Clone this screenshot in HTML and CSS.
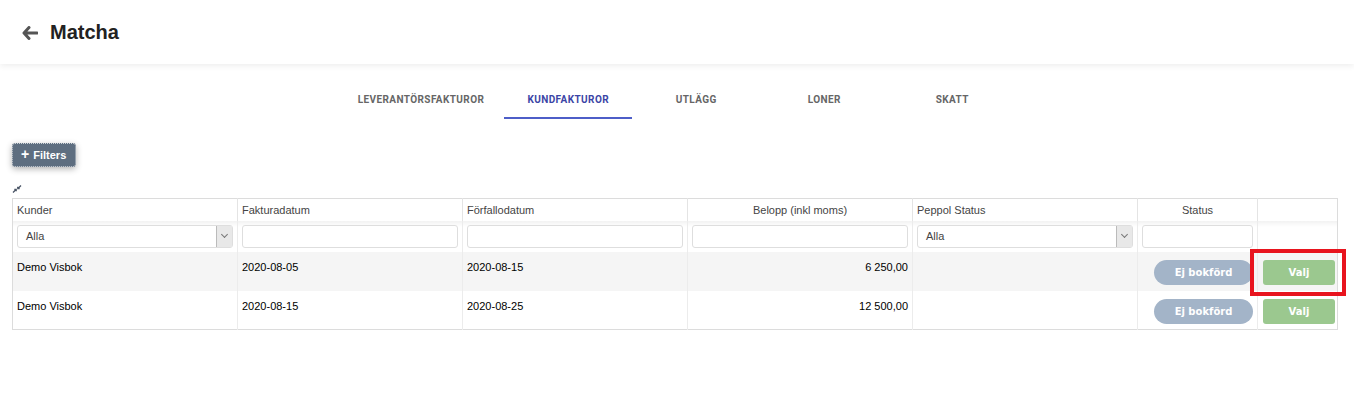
FILE: index.html
```html
<!DOCTYPE html>
<html lang="sv">
<head>
  <meta charset="UTF-8">
  <meta name="viewport" content="width=device-width, initial-scale=1">
  <title>Matcha</title>
  <link rel="stylesheet" href="styles.css">
</head>
<body>

  <header class="topbar">
    <a class="back" href="#">
      <svg width="16" height="14" viewBox="0 0 16 14"><path d="M7 1.5 L2 7 L7 12.5 M2.5 7 H15" fill="none" stroke="#555" stroke-width="3" stroke-linecap="round" stroke-linejoin="round"/></svg>
    </a>
    <h1>Matcha</h1>
  </header>

  <nav class="tabs">
    <a class="tab" href="#">Leverantörsfakturor</a>
    <a class="tab active" href="#">Kundfakturor</a>
    <a class="tab" href="#">Utlägg</a>
    <a class="tab" href="#">Loner</a>
    <a class="tab" href="#">Skatt</a>
  </nav>

  <section class="content">
    <button class="btn-filters"><b class="plus">+</b> Filters</button>

    <div class="collapse">
      <svg width="10" height="8" viewBox="0 0 10 8"><path d="M1 7.5 L4 4.5 M2.3 4.3 H4.2 V6.2 M9 0.5 L6 3.5 M7.7 3.7 H5.8 V1.8" fill="none" stroke="#4a5566" stroke-width="1.3"/></svg>
    </div>

    <table class="grid">
      <colgroup>
        <col style="width:225px"><col style="width:225px"><col style="width:225px">
        <col style="width:225px"><col style="width:225px"><col style="width:120px"><col>
      </colgroup>
      <thead>
        <tr class="head">
          <th>Kunder</th>
          <th>Fakturadatum</th>
          <th>Förfallodatum</th>
          <th class="center">Belopp (inkl moms)</th>
          <th>Peppol Status</th>
          <th class="center">Status</th>
          <th></th>
        </tr>
        <tr class="filter">
          <td><div class="select"><span>Alla</span><i class="caret"></i></div></td>
          <td><div class="input"></div></td>
          <td><div class="input"></div></td>
          <td><div class="input"></div></td>
          <td><div class="select"><span>Alla</span><i class="caret"></i></div></td>
          <td><div class="input"></div></td>
          <td></td>
        </tr>
      </thead>
      <tbody id="rows"></tbody>
    </table>
  </section>

  <script>
    const fakturor = [
      {kund:"Demo Visbok", datum:"2020-08-05", forfall:"2020-08-15", belopp:"6 250,00", markerad:true},
      {kund:"Demo Visbok", datum:"2020-08-15", forfall:"2020-08-25", belopp:"12 500,00", markerad:false}
    ];

    document.getElementById('rows').innerHTML = fakturor.map(f => `
      <tr class="row">
        <td>${f.kund}</td>
        <td>${f.datum}</td>
        <td>${f.forfall}</td>
        <td class="right">${f.belopp}</td>
        <td></td>
        <td class="right"><button class="btn-status">Ej bokförd</button></td>
        <td><span class="pick"><button class="btn-valj">Valj</button>${f.markerad ? '<span class="mark"></span>' : ''}</span></td>
      </tr>
    `).join('');
  </script>
</body>
</html>
```

FILE: styles.css
```css
* { margin:0; padding:0; box-sizing:border-box; }
body { font-family:'Liberation Sans', Arial, sans-serif; background:#fff; color:#222; }

.topbar {
  height:64px; display:flex; align-items:center; gap:12px;
  padding-left:22px; background:#fff;
  box-shadow:0 2px 6px rgba(0,0,0,0.07);
  position:relative;
}
.back { display:flex; margin-top:2px; }
.topbar h1 { font-size:20px; font-weight:bold; color:#222; }

.tabs {
  display:flex; justify-content:center;
  margin-top:18px;
}
.tab {
  height:37px; min-width:128px; padding:0 20px;
  display:flex; align-items:center; justify-content:center;
  font-family:Roboto, sans-serif; font-size:10px; font-weight:bold;
  letter-spacing:0.4px; text-transform:uppercase;
  color:#666; text-decoration:none;
  border-bottom:2px solid transparent;
}
.tab.active { color:#3b45a6; border-bottom-color:#4e5ec8; }

.content { padding:24px 16px 0 12px; }

.btn-filters {
  display:block; height:24px; padding:0 9px 0 8px;
  background:#5e6e80; color:#fff; border:1px dotted rgba(255,255,255,0.7);
  border-radius:3px; font-family:'Liberation Sans', Arial, sans-serif; font-size:11px; font-weight:bold;
  box-shadow:0 2px 6px rgba(0,0,0,0.3); cursor:pointer;
}
.btn-filters .plus { font-size:14px; line-height:10px; margin-right:1px; }

.collapse { height:13px; margin-top:18px; }
.collapse svg { display:block; }

.grid {
  width:1326px; table-layout:fixed; border-collapse:collapse;
  border:1px solid #dcdcdc; font-size:11px;
}
.grid th, .grid td { border-right:1px solid #ececec; }
.grid th:last-child, .grid td:last-child { border-right:none; }

.head th {
  height:22px; padding:0 4px; text-align:left;
  font-weight:normal; color:#444; border-right-color:#e4e4e4;
}
.head th.center { text-align:center; }

.filter td {
  height:31px; padding:0 4px;
  background:linear-gradient(#f2f2f2, #fff 6px);
}
.input, .select {
  height:23px; background:#fff; border:1px solid #dedede; border-radius:3px;
}
.select {
  display:flex; align-items:center; justify-content:space-between;
  padding-left:8px; color:#444; font-size:11px;
}
.caret {
  width:16px; height:21px; background:#e8e8e8; border-left:1px solid #bbb;
  position:relative;
}
.caret::after {
  content:''; position:absolute; left:5px; top:6px;
  width:4px; height:4px; border-right:1px solid #777; border-bottom:1px solid #777;
  transform:rotate(45deg);
}

.row td {
  height:39px; padding:7px 4px 0; vertical-align:top;
  line-height:16px; color:#000;
}
.row td:nth-child(6), .row td:nth-child(7) { padding-top:8px; padding-left:5px; }
.row:nth-child(odd) td { background:#f5f5f5; }
.row td.right { text-align:right; padding-right:4px; }

.btn-status {
  width:99px; height:25px; border:none; border-radius:13px;
  background:#a3b4c8; color:#fff; font-family:'DejaVu Sans', sans-serif;
  font-size:10px; font-weight:bold; cursor:pointer;
}
.pick { position:relative; display:block; width:72px; }
.btn-valj {
  display:block; width:72px; height:25px; border:none; border-radius:3px;
  background:#9bc88f; color:#fff; font-family:'DejaVu Sans', sans-serif;
  font-size:10px; font-weight:bold; cursor:pointer;
}
.mark {
  position:absolute; top:-11px; bottom:-11px; left:-13px; right:-11px;
  border:4px solid #e8141e;
}
```
